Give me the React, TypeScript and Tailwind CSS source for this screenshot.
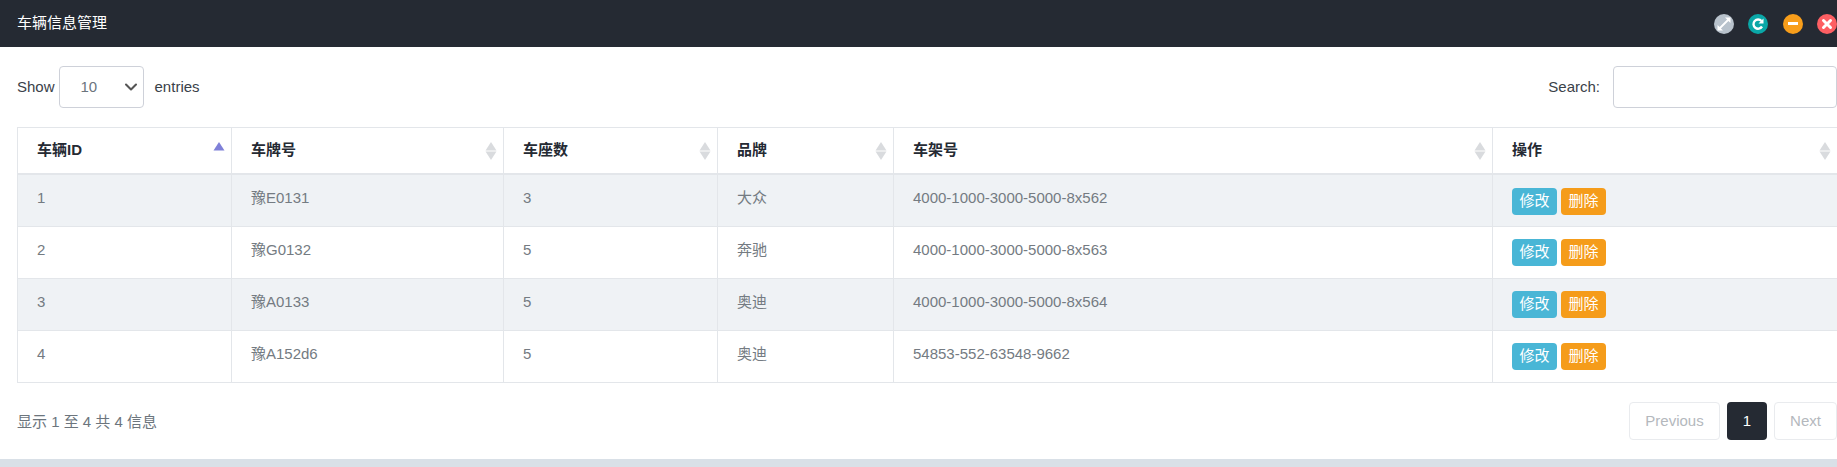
import { ChevronDown } from "lucide-react";

const rows = [
  { id: "1", plate: "豫E0131", seats: "3", brand: "大众", vin: "4000-1000-3000-5000-8x562" },
  { id: "2", plate: "豫G0132", seats: "5", brand: "奔驰", vin: "4000-1000-3000-5000-8x563" },
  { id: "3", plate: "豫A0133", seats: "5", brand: "奥迪", vin: "4000-1000-3000-5000-8x564" },
  { id: "4", plate: "豫A152d6", seats: "5", brand: "奥迪", vin: "54853-552-63548-9662" },
];

const columns = [
  { label: "车辆ID", width: "w-[214px]", active: true },
  { label: "车牌号", width: "w-[272px]" },
  { label: "车座数", width: "w-[214px]" },
  { label: "品牌", width: "w-[176px]" },
  { label: "车架号", width: "w-[599px]" },
  { label: "操作", width: "w-[345px]" },
];

const SortArrows = ({ active }: { active?: boolean }) => (
  <svg className="absolute right-[6px] top-[13px]" width="12" height="20" viewBox="0 0 12 20">
    <path d="M6 1 L11.500 9.500 H0.500 Z" fill={active ? "#7f80d8" : "#d9dbde"} />
    {!active && <path d="M6 19 L11.500 10.500 H0.500 Z" fill="#d9dbde" />}
  </svg>
);

const HeaderIcons = () => (
  <div className="flex items-center gap-[14.5px]">
    <span className="flex h-5 w-5 items-center justify-center rounded-full bg-[#b8c2cc]">
      <svg width="16" height="16" viewBox="0 0 16 16" fill="#fff">
        <path d="M9 1.500h5.500V7L12.400 4.900 4.900 12.400 7 14.500H1.500V9L3.600 11.100 11.100 3.600z" />
      </svg>
    </span>
    <span className="flex h-5 w-5 items-center justify-center rounded-full bg-[#0aa7a7]">
      <svg width="14" height="14" viewBox="0 0 14 14" fill="none">
        <path d="M11 9.500A4.600 4.600 0 1 1 10.500 4" stroke="#fff" strokeWidth="2.400" />
        <path d="M12.500 1.500V6.500H7.500z" fill="#fff" />
      </svg>
    </span>
    <span className="flex h-5 w-5 items-center justify-center rounded-full bg-[#f89e1b]">
      <span className="h-[3px] w-[10px] bg-white" />
    </span>
    <span className="flex h-5 w-5 items-center justify-center rounded-full bg-[#fd5f63]">
      <svg width="12" height="12" viewBox="0 0 12 12" stroke="#fff" strokeWidth="3" strokeLinecap="round">
        <path d="M2.500 2.500l7 7M9.500 2.500l-7 7" />
      </svg>
    </span>
  </div>
);

export default function App() {
  return (
    <div className="h-[467px] w-[1837px] overflow-hidden bg-white font-['Liberation_Sans','Noto_Sans_CJK_SC',sans-serif] text-[15px] text-[#6c757d]">
      <div className="flex h-[47px] items-center justify-between bg-[#252a33] pl-[17px] text-white">
        <h1 className="text-[15px] font-normal">车辆信息管理</h1>
        <HeaderIcons />
      </div>

      <div className="h-[412px] pl-[17px]">
        <div className="flex h-[80px] items-start justify-between pt-[19px]">
          <div className="flex h-[42px] items-center text-[#3a4149]">
            <span>Show</span>
            <div className="relative ml-[4px] mr-[11px] flex h-[42px] w-[85px] items-center rounded border border-[#ced1d9] pl-[21px] text-[#6c757d]">
              10
              <ChevronDown className="absolute right-[2px] top-[10px] h-5 w-5 text-[#555]" strokeWidth={2.5} />
            </div>
            <span>entries</span>
          </div>
          <div className="flex h-[42px] items-center text-[#3a4149]">
            <span className="mr-[13px]">Search:</span>
            <input className="h-[42px] w-[224px] rounded border border-[#ced1d9] outline-none" />
          </div>
        </div>

        <table className="w-[1820px] table-fixed border-collapse border border-[#e3e6ea]">
          <thead>
            <tr className="h-[46px] border-b-2 border-[#e3e6ea]">
              {columns.map((col) => (
                <th
                  key={col.label}
                  className={`${col.width} relative border-r border-[#e3e6ea] px-[19px] text-left font-bold text-[#252a33]`}
                >
                  {col.label}
                  <SortArrows active={col.active} />
                </th>
              ))}
            </tr>
          </thead>
          <tbody className="text-[#747b82]">
            {rows.map((row, i) => (
              <tr
                key={row.id}
                className={`border-b border-[#e3e6ea] align-top ${i === 0 ? "h-[53px]" : "h-[52px]"} ${i % 2 === 0 ? "bg-[#eff2f5]" : "bg-white"}`}
              >
                <td className="border-r border-[#e3e6ea] px-[19px] pt-[12px] leading-[22px]">{row.id}</td>
                <td className="border-r border-[#e3e6ea] px-[19px] pt-[12px] leading-[22px]">{row.plate}</td>
                <td className="border-r border-[#e3e6ea] px-[19px] pt-[12px] leading-[22px]">{row.seats}</td>
                <td className="border-r border-[#e3e6ea] px-[19px] pt-[12px] leading-[22px]">{row.brand}</td>
                <td className="border-r border-[#e3e6ea] px-[19px] pt-[12px] leading-[22px]">{row.vin}</td>
                <td className={`px-[19px] ${i === 0 ? "pt-[13px]" : "pt-[12px]"}`}>
                  <div className="flex gap-[4px]">
                    <span className="flex h-[27px] w-[45px] items-center justify-center rounded bg-[#49b6d6] text-white">修改</span>
                    <span className="flex h-[27px] w-[45px] items-center justify-center rounded bg-[#f59c1a] text-white">删除</span>
                  </div>
                </td>
              </tr>
            ))}
          </tbody>
        </table>

        <div className="flex items-center justify-between pt-[19px]">
          <span className="pt-[3px] text-[#6c757d]">显示 1 至 4 共 4 信息</span>
          <div className="flex gap-[7px]">
            <span className="flex h-[38px] w-[91px] items-center justify-center rounded border border-[#e9ebee] pt-[1px] text-[#b4b8bd]">Previous</span>
            <span className="flex h-[38px] w-[40px] items-center justify-center rounded bg-[#252a33] pt-[1px] text-white">1</span>
            <span className="flex h-[38px] w-[63px] items-center justify-center rounded border border-[#e9ebee] pt-[1px] text-[#b4b8bd]">Next</span>
          </div>
        </div>
      </div>

      <div className="h-[8px] bg-[#d9e0e7]" />
    </div>
  );
}
